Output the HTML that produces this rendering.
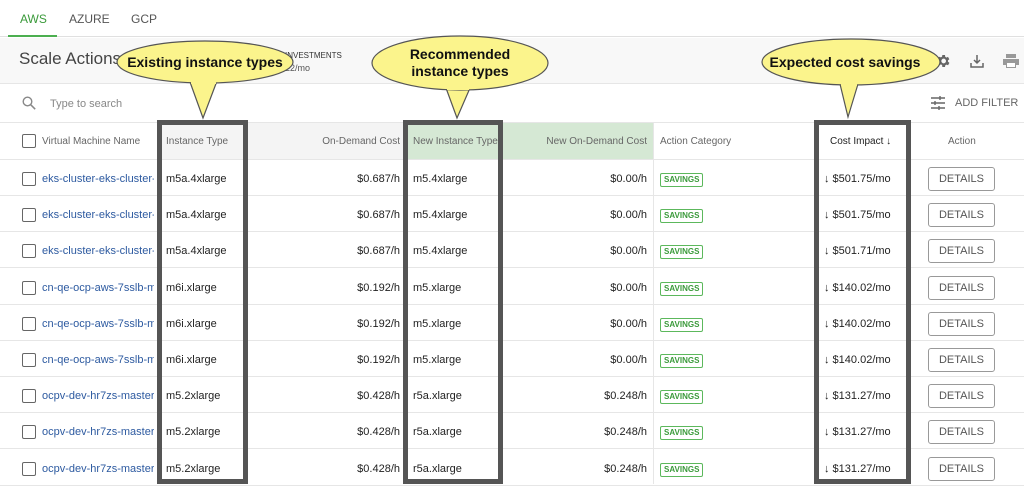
<!DOCTYPE html>
<html><head><style>
*{box-sizing:border-box;margin:0;padding:0}
body{width:1024px;height:484px;overflow:hidden;background:#fff;font-family:"Liberation Sans",sans-serif;position:relative;color:#222}
.a{position:absolute}
.hd{font-size:10px;color:#666}
.row{position:absolute;left:0;width:1024px;height:36px;border-bottom:1px solid #e6e6e6;font-size:11px}
.row div{position:absolute;top:1px;line-height:36px}
.cb{width:14px;height:14px;border:1.5px solid #666;border-radius:2px;top:12px!important}
.sav{font-size:8px;font-weight:bold;color:#3a9a3a;border:1px solid #5cb85c;border-radius:2px;padding:1px 3px;line-height:10px!important;top:13px!important}
.btn{width:67px;height:24px;border:1px solid #999;border-radius:3px;top:7px!important;line-height:22px!important;text-align:center;font-size:11px;color:#555}
.box{position:absolute;border:5px solid #555}
</style></head><body>
<!-- tabs -->
<div class="a" style="left:0;top:0;width:1024px;height:37px;border-bottom:1px solid #e0e0e0"></div>
<div class="a" style="left:20px;top:12px;font-size:12px;color:#3a9a3a">AWS</div>
<div class="a" style="left:8px;top:35px;width:49px;height:2px;background:#4caf50"></div>
<div class="a" style="left:69px;top:12px;font-size:12px;color:#555">AZURE</div>
<div class="a" style="left:131px;top:12px;font-size:12px;color:#555">GCP</div>
<!-- header band -->
<div class="a" style="left:0;top:38px;width:1024px;height:46px;background:#f8f8f8;border-bottom:1px solid #e6e6e6"></div>
<div class="a" style="left:19px;top:49px;font-size:17px;color:#444">Scale Actions</div>
<div class="a" style="left:285px;top:51px;font-size:8px;color:#333">INVESTMENTS</div>
<div class="a" style="left:285px;top:63px;font-size:9px;color:#555">22/mo</div>
<svg class="a" style="left:935px;top:53px" width="16" height="16" viewBox="0 0 24 24"><path fill="#666" d="M19.4 13a7.5 7.5 0 000-2l2.1-1.6-2-3.5-2.5 1a7 7 0 00-1.7-1L15 3h-4l-.4 2.6a7 7 0 00-1.7 1l-2.5-1-2 3.5L6.6 11a7.5 7.5 0 000 2l-2.1 1.6 2 3.5 2.5-1a7 7 0 001.7 1L11 21h4l.4-2.6a7 7 0 001.7-1l2.5 1 2-3.5zM13 15.5a3.5 3.5 0 110-7 3.5 3.5 0 010 7z"/></svg>
<svg class="a" style="left:969px;top:53px" width="16" height="16" viewBox="0 0 16 16"><path fill="none" stroke="#666" stroke-width="1.5" d="M8 2v8M5 7l3 3 3-3M2 10v4h12v-4"/></svg>
<svg class="a" style="left:1002px;top:53px" width="18" height="16" viewBox="0 0 18 16"><path fill="#999" d="M4 1h10v4H4zM1 6h16v6h-3v3H4v-3H1z"/><rect x="5" y="10" width="8" height="4" fill="#fff"/></svg>
<!-- search row -->
<svg class="a" style="left:22px;top:96px" width="14" height="14" viewBox="0 0 14 14"><circle cx="5.5" cy="5.5" r="4.3" fill="none" stroke="#888" stroke-width="1.4"/><path d="M8.7 8.7l4.5 4.5" stroke="#888" stroke-width="1.5"/></svg>
<div class="a" style="left:50px;top:98px;font-size:11px;color:#888">Type to search</div>
<svg class="a" style="left:930px;top:95px" width="16" height="16" viewBox="0 0 16 16"><path stroke="#666" stroke-width="1.4" d="M1 3h14M1 8h14M1 13h14M10 1v4M5 6v4M9 11v4"/></svg>
<div class="a" style="left:955px;top:97px;font-size:11px;color:#666">ADD FILTER</div>
<!-- table header -->
<div class="a" style="left:0;top:122px;width:1024px;height:38px;border-top:1px solid #e6e6e6;border-bottom:1px solid #e6e6e6"></div>
<div class="a" style="left:160px;top:123px;width:246px;height:36px;background:#f4f4f4"></div>
<div class="a" style="left:406px;top:123px;width:247px;height:36px;background:#d5e8d4"></div>
<div class="a" style="left:653px;top:122px;width:1px;height:362px;background:#e6e6e6"></div>
<div class="a" style="left:22px;top:134px;width:14px;height:14px;border:1.5px solid #666;border-radius:2px"></div>
<div class="a hd" style="left:42px;top:136px">Virtual Machine Name</div>
<div class="a hd" style="left:166px;top:136px">Instance Type</div>
<div class="a hd" style="left:300px;top:136px;width:100px;text-align:right">On-Demand Cost</div>
<div class="a hd" style="left:413px;top:136px">New Instance Type</div>
<div class="a hd" style="left:530px;top:136px;width:117px;text-align:right">New On-Demand Cost</div>
<div class="a hd" style="left:660px;top:136px">Action Category</div>
<div class="a hd" style="left:830px;top:136px;color:#222">Cost Impact ↓</div>
<div class="a hd" style="left:948px;top:136px">Action</div>
<!-- rows -->
<div id="rows"></div>
<script>
var d=[["eks-cluster-eks-cluster-","m5a.4xlarge","$0.687/h","m5.4xlarge","$0.00/h","$501.75/mo"],
["eks-cluster-eks-cluster-","m5a.4xlarge","$0.687/h","m5.4xlarge","$0.00/h","$501.75/mo"],
["eks-cluster-eks-cluster-","m5a.4xlarge","$0.687/h","m5.4xlarge","$0.00/h","$501.71/mo"],
["cn-qe-ocp-aws-7sslb-m","m6i.xlarge","$0.192/h","m5.xlarge","$0.00/h","$140.02/mo"],
["cn-qe-ocp-aws-7sslb-m","m6i.xlarge","$0.192/h","m5.xlarge","$0.00/h","$140.02/mo"],
["cn-qe-ocp-aws-7sslb-m","m6i.xlarge","$0.192/h","m5.xlarge","$0.00/h","$140.02/mo"],
["ocpv-dev-hr7zs-master-","m5.2xlarge","$0.428/h","r5a.xlarge","$0.248/h","$131.27/mo"],
["ocpv-dev-hr7zs-master-","m5.2xlarge","$0.428/h","r5a.xlarge","$0.248/h","$131.27/mo"],
["ocpv-dev-hr7zs-master-","m5.2xlarge","$0.428/h","r5a.xlarge","$0.248/h","$131.27/mo"]];
var h="";d.forEach(function(r,i){var t=160+i*36.2;
h+='<div class="row" style="top:'+t+'px"><div class="cb" style="left:22px"></div><div style="left:42px;width:112px;overflow:hidden;white-space:nowrap;color:#2d5aa0">'+r[0]+'</div><div style="left:166px">'+r[1]+'</div><div style="left:300px;width:100px;text-align:right">'+r[2]+'</div><div style="left:413px">'+r[3]+'</div><div style="left:530px;width:117px;text-align:right">'+r[4]+'</div><div class="sav" style="left:660px">SAVINGS</div><div style="left:824px">↓ '+r[5]+'</div><div class="btn" style="left:928px">DETAILS</div></div>';});
document.getElementById('rows').innerHTML=h;
</script>
<!-- highlight boxes -->
<div class="box" style="left:157px;top:120px;width:91px;height:364px"></div>
<div class="box" style="left:403px;top:120px;width:100px;height:364px"></div>
<div class="box" style="left:814px;top:120px;width:97px;height:364px"></div>
<!-- callouts -->
<svg class="a" style="left:0;top:0" width="1024" height="130">
<g fill="#fbf48c" stroke="#555" stroke-width="1.2">
<path d="M190 82 L203 118 L217 81"/>
<ellipse cx="205" cy="62" rx="88" ry="21"/>
<path d="M446 88 L457 118 L470 88"/>
<ellipse cx="460" cy="63" rx="88" ry="27"/>
<path d="M840 84 L848 117 L858 84"/>
<ellipse cx="851" cy="62" rx="89" ry="23"/>
</g>
<g stroke="none" fill="#fbf48c"><rect x="191" y="78" width="25" height="6"/><rect x="447" y="84" width="22" height="6"/><rect x="841" y="80" width="16" height="6"/></g>
<g font-family="Liberation Sans" font-weight="bold" font-size="14" fill="#111" text-anchor="middle">
<text x="205" y="67">Existing instance types</text>
<text x="460" y="59">Recommended</text>
<text x="460" y="76">instance types</text>
<text x="845" y="67">Expected cost savings</text>
</g></svg>
</body></html>
